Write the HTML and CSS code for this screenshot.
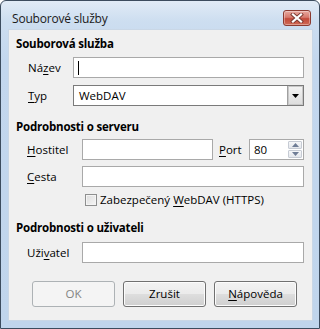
FILE: index.html
```html
<!DOCTYPE html>
<html lang="cs">
<head>
<meta charset="utf-8">
<title>Souborové služby</title>
<link rel="stylesheet" href="styles.css">
</head>
<body>
<div class="window">
  <div class="titlebar">
    <span class="title">Souborové služby</span>
    <span class="close">
      <svg width="14" height="10" viewBox="0 0 14 10">
        <path d="M3 1.5 L11 8.5 M11 1.5 L3 8.5" stroke="#7a3a32" stroke-width="4" stroke-linecap="square" fill="none"/>
        <path d="M3 1.5 L11 8.5 M11 1.5 L3 8.5" stroke="#ffffff" stroke-width="2.2" stroke-linecap="square" fill="none"/>
      </svg>
    </span>
  </div>
  <div class="panel">
    <div class="group-title first">Souborová služba</div>
    <div class="row narrow r1">
      <span class="lbl">Ná<u>z</u>ev</span>
      <div class="field text"><span class="caret"></span></div>
    </div>
    <div class="row narrow r2">
      <span class="lbl"><u>T</u>yp</span>
      <div class="field select"><span class="value">WebDAV</span><span class="drop"><svg width="7" height="4" viewBox="0 0 7 4"><path d="M0 0 H7 L3.5 4 Z" fill="#000"/></svg></span></div>
    </div>

    <div class="group-title g2">Podrobnosti o serveru</div>
    <div class="row wide r3">
      <span class="lbl"><u>H</u>ostitel</span>
      <div class="field text host"></div>
      <span class="port-lbl"><u>P</u>ort</span>
      <div class="field spin"><span class="value">80</span>
        <span class="spin-btns">
          <span class="sb"><svg width="7" height="4" viewBox="0 0 7 4"><path d="M0 4 H7 L3.5 0 Z" fill="#6f7d96"/></svg></span>
          <span class="sb"><svg width="7" height="4" viewBox="0 0 7 4"><path d="M0 0 H7 L3.5 4 Z" fill="#6f7d96"/></svg></span>
        </span>
      </div>
    </div>
    <div class="row wide r4">
      <span class="lbl"><u>C</u>esta</span>
      <div class="field text"></div>
    </div>
    <div class="row check-row">
      <span class="checkbox"></span>
      <span class="check-lbl">Zabezpečený <u>W</u>ebDAV (HTTPS)</span>
    </div>

    <div class="group-title g3">Podrobnosti o uživateli</div>
    <div class="row wide r5">
      <span class="lbl">Uži<u>v</u>atel</span>
      <div class="field text"></div>
    </div>

    <div class="buttons">
      <span class="btn disabled">OK</span>
      <span class="btn">Zrušit</span>
      <span class="btn"><u>N</u>ápověda</span>
    </div>
  </div>
</div>
</body>
</html>
```

FILE: styles.css
```css
* { box-sizing: border-box; }
html, body { margin: 0; padding: 0; }
body {
  width: 320px;
  height: 329px;
  font-family: "Open Sans", "Noto Sans", sans-serif;
  font-size: 11.5px;
  color: #000;
  background: #fff;
}
u { text-decoration: underline; text-underline-offset: 2px; }

.window {
  width: 320px;
  height: 329px;
  border: 1px solid #3c4c5e;
  border-radius: 6px 6px 0 0;
  background: linear-gradient(#e1ebf6 0px, #cddef0 20px, #c3d7ee 60px, #c0d5ec 100%);
  padding: 0 6px 7px 7px;
  display: flex;
  flex-direction: column;
}

.titlebar {
  height: 28px;
  display: flex;
  align-items: flex-start;
  justify-content: space-between;
  flex-shrink: 0;
}
.title {
  margin-top: 10px;
  margin-left: 4px;
  line-height: 16px;
  font-size: 12px;
  letter-spacing: -0.2px;
  color: #1a1a1a;
}
.close {
  margin-top: 9px;
  margin-right: 2px;
  width: 28px;
  height: 16px;
  border: 1px solid #8b3b31;
  border-radius: 3px;
  background: linear-gradient(#e8a99f 0%, #d77a6d 45%, #c24a3a 55%, #cf6a55 100%);
  display: flex;
  align-items: center;
  justify-content: center;
  box-shadow: inset 0 0 0 1px rgba(255,255,255,0.35);
}
.close svg { display: block; }

.panel {
  flex: 1;
  background: #f0f0f0;
  border: 1px solid #c9d7e6;
  padding: 6px 8px 0 0;
  display: flex;
  flex-direction: column;
}

.group-title {
  font-weight: bold;
  line-height: 16px;
  height: 16px;
  padding-left: 7px;
  font-size: 11.5px;
  letter-spacing: -0.2px;
}
.g2 { margin-top: 13px; }
.g3 { margin-top: 14px; }

.row {
  display: flex;
  align-items: center;
  height: 21px;
}
.narrow { padding-left: 19px; }
.narrow .lbl { width: 45px; }
.wide { padding-left: 18px; }
.wide .lbl { width: 55px; }
.r1 { margin-top: 5px; }
.r2 { margin-top: 7px; }
.r3 { margin-top: 4px; }
.r4 { margin-top: 6px; }
.r5 { margin-top: 6px; }

.lbl { flex-shrink: 0; line-height: 16px; }

.field {
  height: 21px;
  background: #fff;
  flex: 1;
  border: 1px solid #a9a9a9;
  display: flex;
  align-items: center;
}
.caret {
  width: 1px;
  height: 14px;
  background: #000;
  margin-left: 4px;
}
.select {
  border: 1px solid #7a7a7a;
  padding-left: 5px;
}
.select .value { flex: 1; line-height: 16px; }
.drop {
  width: 16px;
  height: 19px;
  border-left: 1px solid #a0a0a0;
  background: linear-gradient(#f4f4f4, #dcdcdc);
  display: flex;
  align-items: center;
  justify-content: center;
  box-shadow: inset 0 0 0 1px #c8c8c8;
}
.drop svg, .sb svg { display: block; }

.host { flex: 0 0 131px; }
.port-lbl { margin-left: 6px; width: 30px; line-height: 16px; }
.spin { padding-left: 4px; }
.spin .value { flex: 1; line-height: 16px; }
.spin-btns {
  width: 16px;
  height: 19px;
  display: flex;
  flex-direction: column;
  gap: 1px;
  padding: 1px;
}
.sb {
  flex: 1;
  border: 1px solid #c6cbd4;
  border-radius: 1px;
  background: linear-gradient(#f6f7f9, #e4e7ec);
  display: flex;
  align-items: center;
  justify-content: center;
}

.check-row {
  margin-top: 6px;
  height: 13px;
  padding-left: 76px;
}
.checkbox {
  width: 12px;
  height: 12px;
  border: 1px solid #8e8f8f;
  background: linear-gradient(135deg, #dcdcdc, #f6f6f6);
  box-shadow: inset 0 0 0 1px #f4f4f4;
  flex-shrink: 0;
}
.check-lbl { margin-left: 3px; line-height: 16px; }

.buttons {
  margin-top: 18px;
  display: flex;
  justify-content: flex-end;
  gap: 8px;
  padding-right: 7px;
}
.btn {
  width: 83px;
  height: 26px;
  border: 1px solid #707070;
  border-radius: 3px;
  background: linear-gradient(#f2f2f2 0%, #ebebeb 48%, #dddddd 52%, #cfcfcf 100%);
  box-shadow: inset 0 0 0 1px #fcfcfc;
  display: flex;
  align-items: center;
  justify-content: center;
  line-height: 16px;
}
.btn.disabled {
  border-color: #adb2b5;
  background: #f4f4f4;
  color: #838383;
  box-shadow: none;
}
```
